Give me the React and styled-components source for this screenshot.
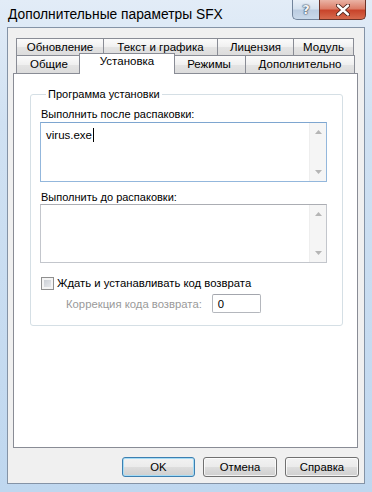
import React from 'react';
import styled, { createGlobalStyle } from 'styled-components';

const GlobalStyle = createGlobalStyle`
  html, body {
    margin: 0;
    padding: 0;
    width: 372px;
    height: 492px;
    overflow: hidden;
    background: #bcd5ee;
  }
  * {
    box-sizing: border-box;
  }
`;

const Window = styled.div`
  width: 372px;
  height: 492px;
  display: flex;
  flex-direction: column;
  padding: 0 7px 8px 7px;
  background: linear-gradient(180deg, #e2ecf7 0%, #d0e1f2 25%, #bfd7ef 100%);
  font-family: 'Liberation Sans', Arial, sans-serif;
  font-size: 11px;
  color: #000;
`;

const TitleBar = styled.div`
  height: 27px;
  display: flex;
  justify-content: space-between;
  align-items: flex-start;
`;

const TitleText = styled.div`
  padding: 7px 0 0 1px;
  font-size: 13.8px;
  line-height: 16px;
  color: #000;
`;

const CaptionButtons = styled.div`
  display: flex;
  margin-right: -1px;
`;

const HelpButton = styled.div`
  width: 27px;
  height: 20px;
  display: flex;
  align-items: center;
  justify-content: center;
  border: 1px solid #72849b;
  border-top: none;
  border-right: none;
  border-bottom-left-radius: 5px;
  background: linear-gradient(180deg, #e9f0f8 0%, #d6e2ef 45%, #bccde1 55%, #c9d9ea 100%);
  font-family: 'DejaVu Sans', sans-serif;
  font-weight: bold;
  font-size: 13px;
  color: #f4f6f9;
  text-shadow: 0 0 1px #3a4a5e, 0 0 1px #3a4a5e, 0 0 2px #3a4a5e;
`;

const CloseButton = styled.div`
  width: 47px;
  height: 20px;
  display: flex;
  align-items: center;
  justify-content: center;
  border: 1px solid #6b3328;
  border-top: none;
  border-bottom-right-radius: 5px;
  background: linear-gradient(180deg, #eab3a5 0%, #dc7e69 45%, #c8442b 55%, #d66a4d 100%);
`;

const Client = styled.div`
  flex: 1;
  display: flex;
  flex-direction: column;
  border: 1px solid #8493a6;
  background: #f0f0f0;
  padding: 10px 6px 0 5px;
`;

const TabStrip = styled.div`
  display: flex;
  flex-direction: column;
  padding-left: 3px;
`;

const TabRow = styled.div`
  display: flex;
  align-items: flex-start;
  height: ${(p) => p.$h}px;
`;

const Tab = styled.div`
  width: ${(p) => p.$w}px;
  height: ${(p) => p.$h}px;
  margin-left: -1px;
  &:first-child {
    margin-left: 0;
  }
  border: 1px solid #898c95;
  border-bottom: none;
  background: linear-gradient(180deg, #fbfbfb 0%, #f0f0f0 50%, #e4e4e4 51%, #dcdcdc 100%);
  text-align: center;
  font-size: 11.5px;
  line-height: 15px;
  padding-top: 1px;
  white-space: nowrap;
`;

const ActiveTab = styled(Tab)`
  position: relative;
  z-index: 2;
  margin-left: -3px;
  margin-right: -2px;
  margin-top: -2px;
  background: #fff;
  padding-top: 0;
`;

const Pane = styled.div`
  height: 375px;
  border: 1px solid #898c95;
  background: #fff;
  padding: 13px 14px 0 16px;
`;

const Group = styled.fieldset`
  margin: 0;
  border: 1px solid #d5dfe5;
  border-radius: 3px;
  padding: 6px 15px 12px 9px;
  display: flex;
  flex-direction: column;
`;

const Legend = styled.legend`
  margin-left: 6px;
  padding: 0 2px;
  line-height: 14px;
`;

const FieldLabel = styled.div`
  line-height: 14px;
  padding-left: 1px;
  margin-top: ${(p) => p.$mt || 0}px;
`;

const TextBox = styled.div`
  margin-top: ${(p) => p.$mt || 0}px;
  height: ${(p) => p.$h}px;
  display: flex;
  border: 1px solid ${(p) => (p.$focused ? '#93b7dc' : '#c3c6cc')};
  border-top-color: ${(p) => (p.$focused ? '#7ea6d0' : '#abadb3')};
  background: #fff;
`;

const TextArea = styled.div`
  flex: 1;
  padding: 5px 0 0 5px;
  line-height: 14px;
  font-size: 11.5px;
`;

const Caret = styled.span`
  display: inline-block;
  width: 1px;
  height: 14px;
  margin-left: 1px;
  background: #000;
  vertical-align: -3px;
`;

const ScrollTrack = styled.div`
  width: 17px;
  display: flex;
  flex-direction: column;
  justify-content: space-between;
  align-items: center;
  padding: 7px 0;
  background: #f5f5f5;
  border-left: 1px solid #eeeeee;
`;

const CheckRow = styled.div`
  margin-top: 13px;
  display: flex;
  align-items: center;
  gap: 3px;
  height: 14px;
  padding-left: 1px;
  font-size: 11.3px;
`;

const CheckBox = styled.div`
  width: 13px;
  height: 13px;
  border: 1px solid #8f8f8f;
  padding: 2px;
  background: #f4f4f4;
  &::after {
    content: '';
    display: block;
    width: 100%;
    height: 100%;
    background: linear-gradient(135deg, #cbcfd5 0%, #e6e8eb 100%);
  }
`;

const AdjustRow = styled.div`
  margin-top: 4px;
  display: flex;
  align-items: center;
  padding-left: 26px;
  gap: 10px;
  font-size: 11.3px;
`;

const DisabledText = styled.span`
  color: #9a9a9a;
`;

const SmallInput = styled.div`
  width: 49px;
  height: 19px;
  border: 1px solid #b4b7bd;
  border-top-color: #a3a6ad;
  border-radius: 2px;
  padding: 2px 0 0 5px;
  line-height: 14px;
  background: #fff;
`;

const ButtonRow = styled.div`
  margin-top: 9px;
  display: flex;
  justify-content: flex-end;
  gap: 8px;
  margin-right: -1px;
`;

const Button = styled.div`
  width: ${(p) => p.$w}px;
  height: 20px;
  display: flex;
  align-items: center;
  justify-content: center;
  border: 1px solid ${(p) => (p.$default ? '#3c7fb1' : '#707070')};
  border-radius: 3px;
  background: linear-gradient(180deg, #f2f2f2 0%, #ebebeb 50%, #dddddd 51%, #cfcfcf 100%);
  box-shadow: inset 0 0 0 1px ${(p) => (p.$default ? '#a6dcf5' : 'rgba(255, 255, 255, 0.75)')};
  font-size: 11.3px;
`;

const Arrow = ({ up }) => (
  <svg width="7" height="4" viewBox="0 0 7 4">
    <polygon points={up ? '0,4 3.5,0 7,4' : '0,0 3.5,4 7,0'} fill="#b5b5b5" />
  </svg>
);

const CloseGlyph = () => (
  <svg width="14" height="12" viewBox="0 0 14 12">
    <path d="M2 1.5 L12 10.5 M12 1.5 L2 10.5" stroke="#4a2119" strokeWidth="4.2" strokeLinecap="round" />
    <path d="M2 1.5 L12 10.5 M12 1.5 L2 10.5" stroke="#ffffff" strokeWidth="2.4" strokeLinecap="round" />
  </svg>
);

const topTabs = [
  { label: 'Обновление', w: 88 },
  { label: 'Текст и графика', w: 115 },
  { label: 'Лицензия', w: 77 },
  { label: 'Модуль', w: 61 },
];

const bottomTabs = [
  { label: 'Общие', w: 66 },
  { label: 'Установка', w: 96, active: true },
  { label: 'Режимы', w: 74 },
  { label: 'Дополнительно', w: 110 },
];

export default function App() {
  return (
    <>
      <GlobalStyle />
      <Window>
        <TitleBar>
          <TitleText>Дополнительные параметры SFX</TitleText>
          <CaptionButtons>
            <HelpButton>?</HelpButton>
            <CloseButton>
              <CloseGlyph />
            </CloseButton>
          </CaptionButtons>
        </TitleBar>
        <Client>
          <TabStrip>
            <TabRow $h={17}>
              {topTabs.map((t) => (
                <Tab key={t.label} $w={t.w} $h={17}>
                  {t.label}
                </Tab>
              ))}
            </TabRow>
            <TabRow $h={18}>
              {bottomTabs.map((t) =>
                t.active ? (
                  <ActiveTab key={t.label} $w={t.w} $h={21}>
                    {t.label}
                  </ActiveTab>
                ) : (
                  <Tab key={t.label} $w={t.w} $h={18}>
                    {t.label}
                  </Tab>
                )
              )}
            </TabRow>
          </TabStrip>
          <Pane>
            <Group>
              <Legend>Программа установки</Legend>
              <FieldLabel>Выполнить после распаковки:</FieldLabel>
              <TextBox $mt={1} $h={60} $focused>
                <TextArea>
                  virus.exe
                  <Caret />
                </TextArea>
                <ScrollTrack>
                  <Arrow up />
                  <Arrow />
                </ScrollTrack>
              </TextBox>
              <FieldLabel $mt={8}>Выполнить до распаковки:</FieldLabel>
              <TextBox $h={59}>
                <TextArea />
                <ScrollTrack>
                  <Arrow up />
                  <Arrow />
                </ScrollTrack>
              </TextBox>
              <CheckRow>
                <CheckBox />
                Ждать и устанавливать код возврата
              </CheckRow>
              <AdjustRow>
                <DisabledText>Коррекция кода возврата:</DisabledText>
                <SmallInput>0</SmallInput>
              </AdjustRow>
            </Group>
          </Pane>
          <ButtonRow>
            <Button $w={73} $default>
              OK
            </Button>
            <Button $w={74}>Отмена</Button>
            <Button $w={74}>Справка</Button>
          </ButtonRow>
        </Client>
      </Window>
    </>
  );
}
